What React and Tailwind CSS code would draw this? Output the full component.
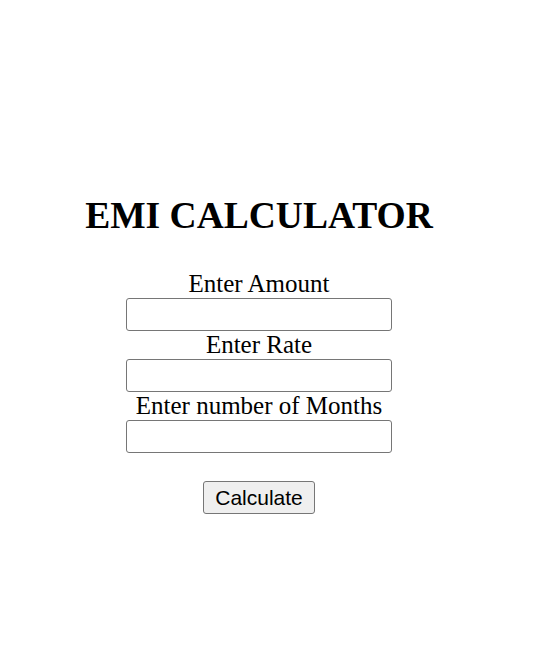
export default function App() {
  const fields = ['Enter Amount', 'Enter Rate', 'Enter number of Months'];

  return (
    <div className="min-h-[655px] bg-white">
      <div className="w-[518px] flex flex-col items-center pt-[193px]" style={{ fontFamily: '"Liberation Serif", serif' }}>
        <h1 className="text-[37.5px] leading-[46px] font-bold text-black">EMI CALCULATOR</h1>

        <div className="mt-[31px] flex flex-col items-center">
          {fields.map((label) => (
            <div key={label} className="flex flex-col items-center">
              <label className="text-[25px] leading-[28px] text-black">{label}</label>
              <input
                type="text"
                className="w-[266px] h-[33px] border border-[#767676] rounded-[3px] bg-white"
              />
            </div>
          ))}
        </div>

        <button
          className="mt-[28px] w-[112px] h-[33px] border border-[#767676] rounded-[3px] bg-[#efefef] text-[21px] text-black"
          style={{ fontFamily: '"Liberation Sans", Arial, sans-serif' }}
        >
          Calculate
        </button>
      </div>
    </div>
  );
}
